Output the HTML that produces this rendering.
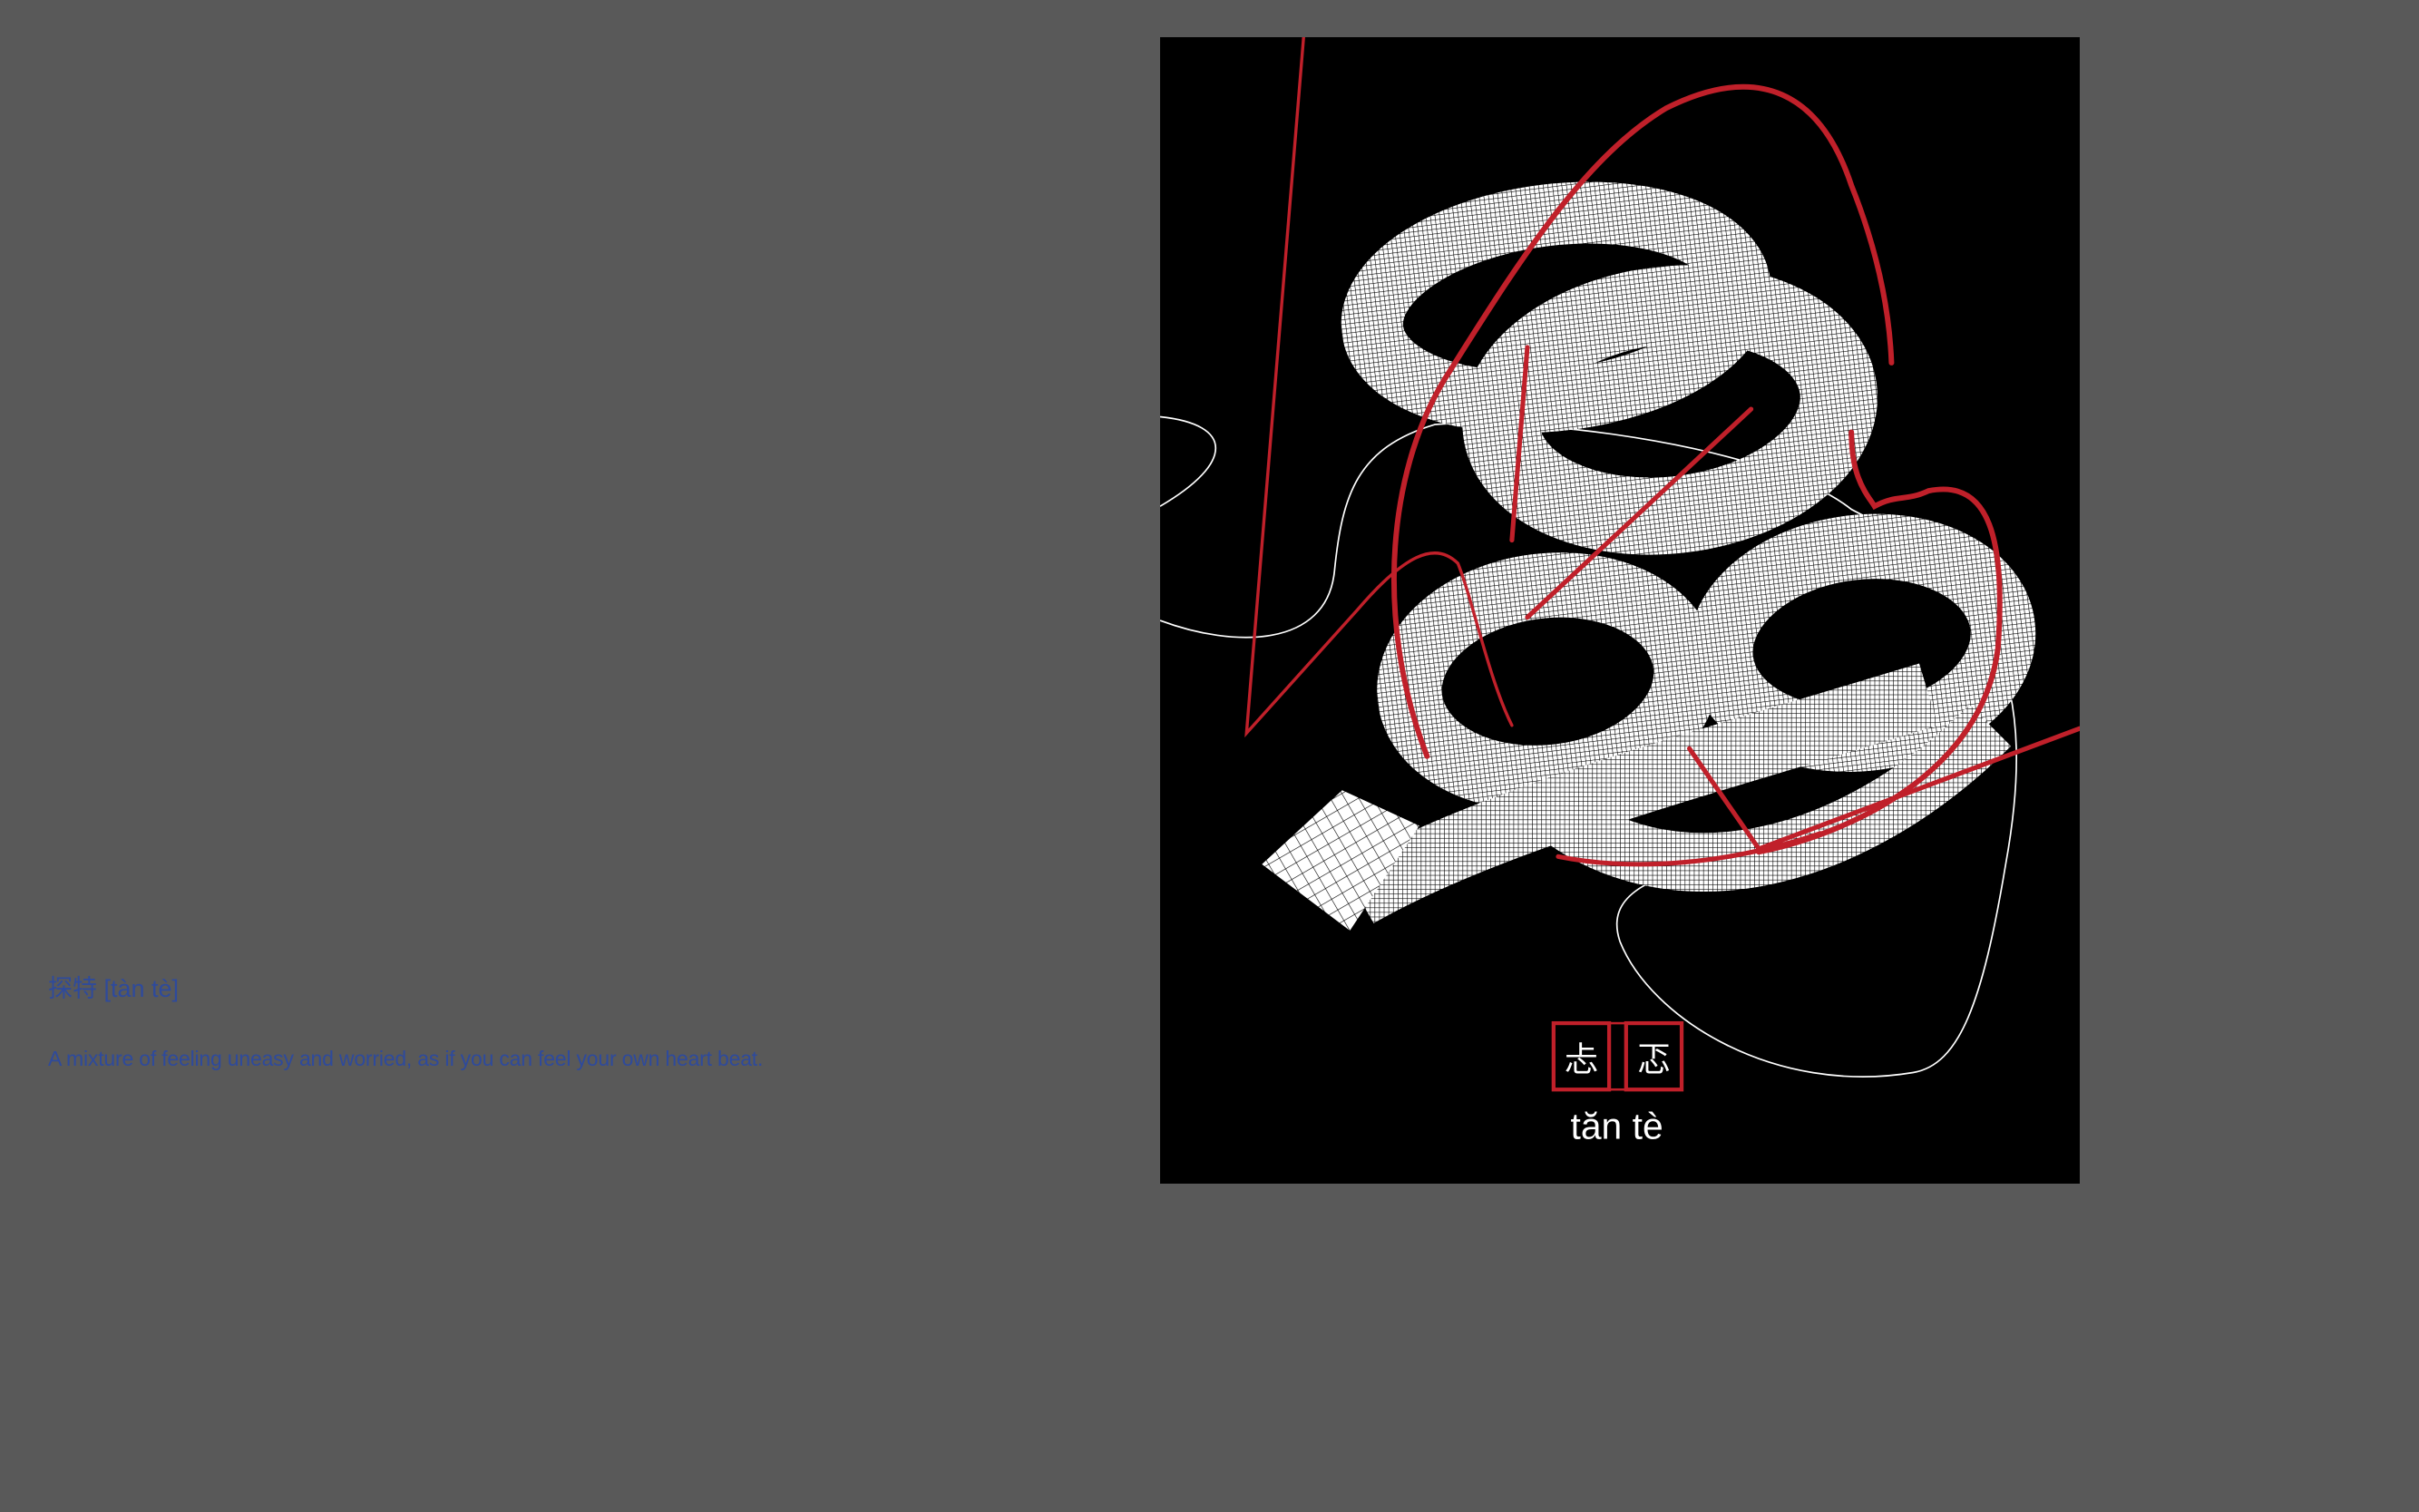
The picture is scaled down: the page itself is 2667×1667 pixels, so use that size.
<!DOCTYPE html>
<html><head><meta charset="utf-8"><style>
html,body{margin:0;padding:0;background:#595959;width:2667px;height:1667px;overflow:hidden;position:relative;font-family:"Liberation Sans","Noto Sans CJK SC",sans-serif}
.t1{position:absolute;left:53px;top:1068px;font-size:27px;color:#2e4a9c;white-space:nowrap}
.t2{position:absolute;left:53px;top:1154px;font-size:23px;color:#2e4a9c;white-space:nowrap;letter-spacing:-0.2px}
svg{position:absolute;left:1279px;top:41px}
</style></head><body>
<div class="t1">探特 [tàn tè]</div>
<div class="t2">A mixture of feeling uneasy and worried, as if you can feel your own heart beat.</div>
<svg width="1014" height="1264" viewBox="752 24 596 743">
<defs>
<pattern id="g" width="3" height="3" patternUnits="userSpaceOnUse">
<rect width="3" height="3" fill="#fff"/><path d="M0 0H3M0 0V3" stroke="#000" stroke-width="0.7"/>
</pattern>
<pattern id="g2" width="8" height="8" patternUnits="userSpaceOnUse" patternTransform="rotate(-30)">
<rect width="8" height="8" fill="#fff"/><path d="M0 0H8M0 0V8" stroke="#000" stroke-width="0.7"/>
</pattern>
</defs>
<rect x="752" y="24" width="596" height="743" fill="#000"/>
<path d="M752 270 C800 275 800 300 752 328" fill="none" stroke="#fff" stroke-width="1"/>
<path d="M752 402 C800 420 860 420 865 370 C870 320 880 290 930 275 C1000 270 1150 290 1200 330 C1300 380 1320 450 1300 560 C1285 650 1270 690 1240 695 C1150 710 1070 660 1050 610 C1040 580 1070 570 1100 560" fill="none" stroke="#fff" stroke-width="1"/>
<g transform="rotate(-7 1050 330)">
<ellipse cx="1025" cy="195" rx="120" ry="60" fill="none" stroke="url(#g)" stroke-width="40"/>
<ellipse cx="1090" cy="270" rx="110" ry="68" fill="none" stroke="url(#g)" stroke-width="50"/>
<ellipse cx="1195" cy="435" rx="92" ry="62" fill="none" stroke="url(#g)" stroke-width="42"/>
<ellipse cx="990" cy="435" rx="90" ry="62" fill="none" stroke="url(#g)" stroke-width="42"/>
</g>
<path d="M1000 520 C1080 590 1200 560 1290 470" fill="none" stroke="url(#g)" stroke-width="38"/>
<path d="M880 580 C950 540 1050 510 1150 480 L1250 450" fill="none" stroke="url(#g)" stroke-width="42"/>
<polygon points="818,560 870,512 920,535 875,603" fill="url(#g2)"/>
<g fill="none" stroke="#c0202a" stroke-linecap="round">
<path d="M845 24 L808 475 L880 395 C910 360 930 350 945 365 C955 390 965 440 980 470" stroke-width="2"/>
<path d="M925 490 C890 400 900 300 940 240 C990 160 1030 100 1080 70 C1140 40 1180 60 1200 120 C1220 170 1225 210 1226 235" stroke-width="3.5"/>
<path d="M990 225 L980 350" stroke-width="3"/>
<path d="M1135 265 L990 400" stroke-width="3"/>
<path d="M1200 280 C1200 310 1210 320 1215 328 C1230 320 1235 325 1250 318 C1290 310 1300 350 1295 420 C1285 500 1200 540 1140 552" stroke-width="3.5"/>
<path d="M1095 485 L1140 550 L1348 472" stroke-width="3"/>
<path d="M1010 555 C1060 565 1120 560 1180 540" stroke-width="3"/>
</g>
<rect x="1007" y="663" width="36" height="43" fill="none" stroke="#c0202a" stroke-width="2.5"/>
<rect x="1054" y="663" width="36" height="43" fill="none" stroke="#c0202a" stroke-width="2.5"/>
<rect x="1043" y="663" width="11" height="43" fill="none" stroke="#c0202a" stroke-width="1.5"/>
<text x="1025" y="694" font-size="22" fill="#fff" text-anchor="middle" font-family="Noto Sans CJK SC, sans-serif">忐</text>
<text x="1072" y="694" font-size="22" fill="#fff" text-anchor="middle" font-family="Noto Sans CJK SC, sans-serif">忑</text>
<text x="1048" y="738" font-size="24" fill="#fff" text-anchor="middle" font-family="Liberation Sans, sans-serif">tăn tè</text>
</svg>
</body></html>
